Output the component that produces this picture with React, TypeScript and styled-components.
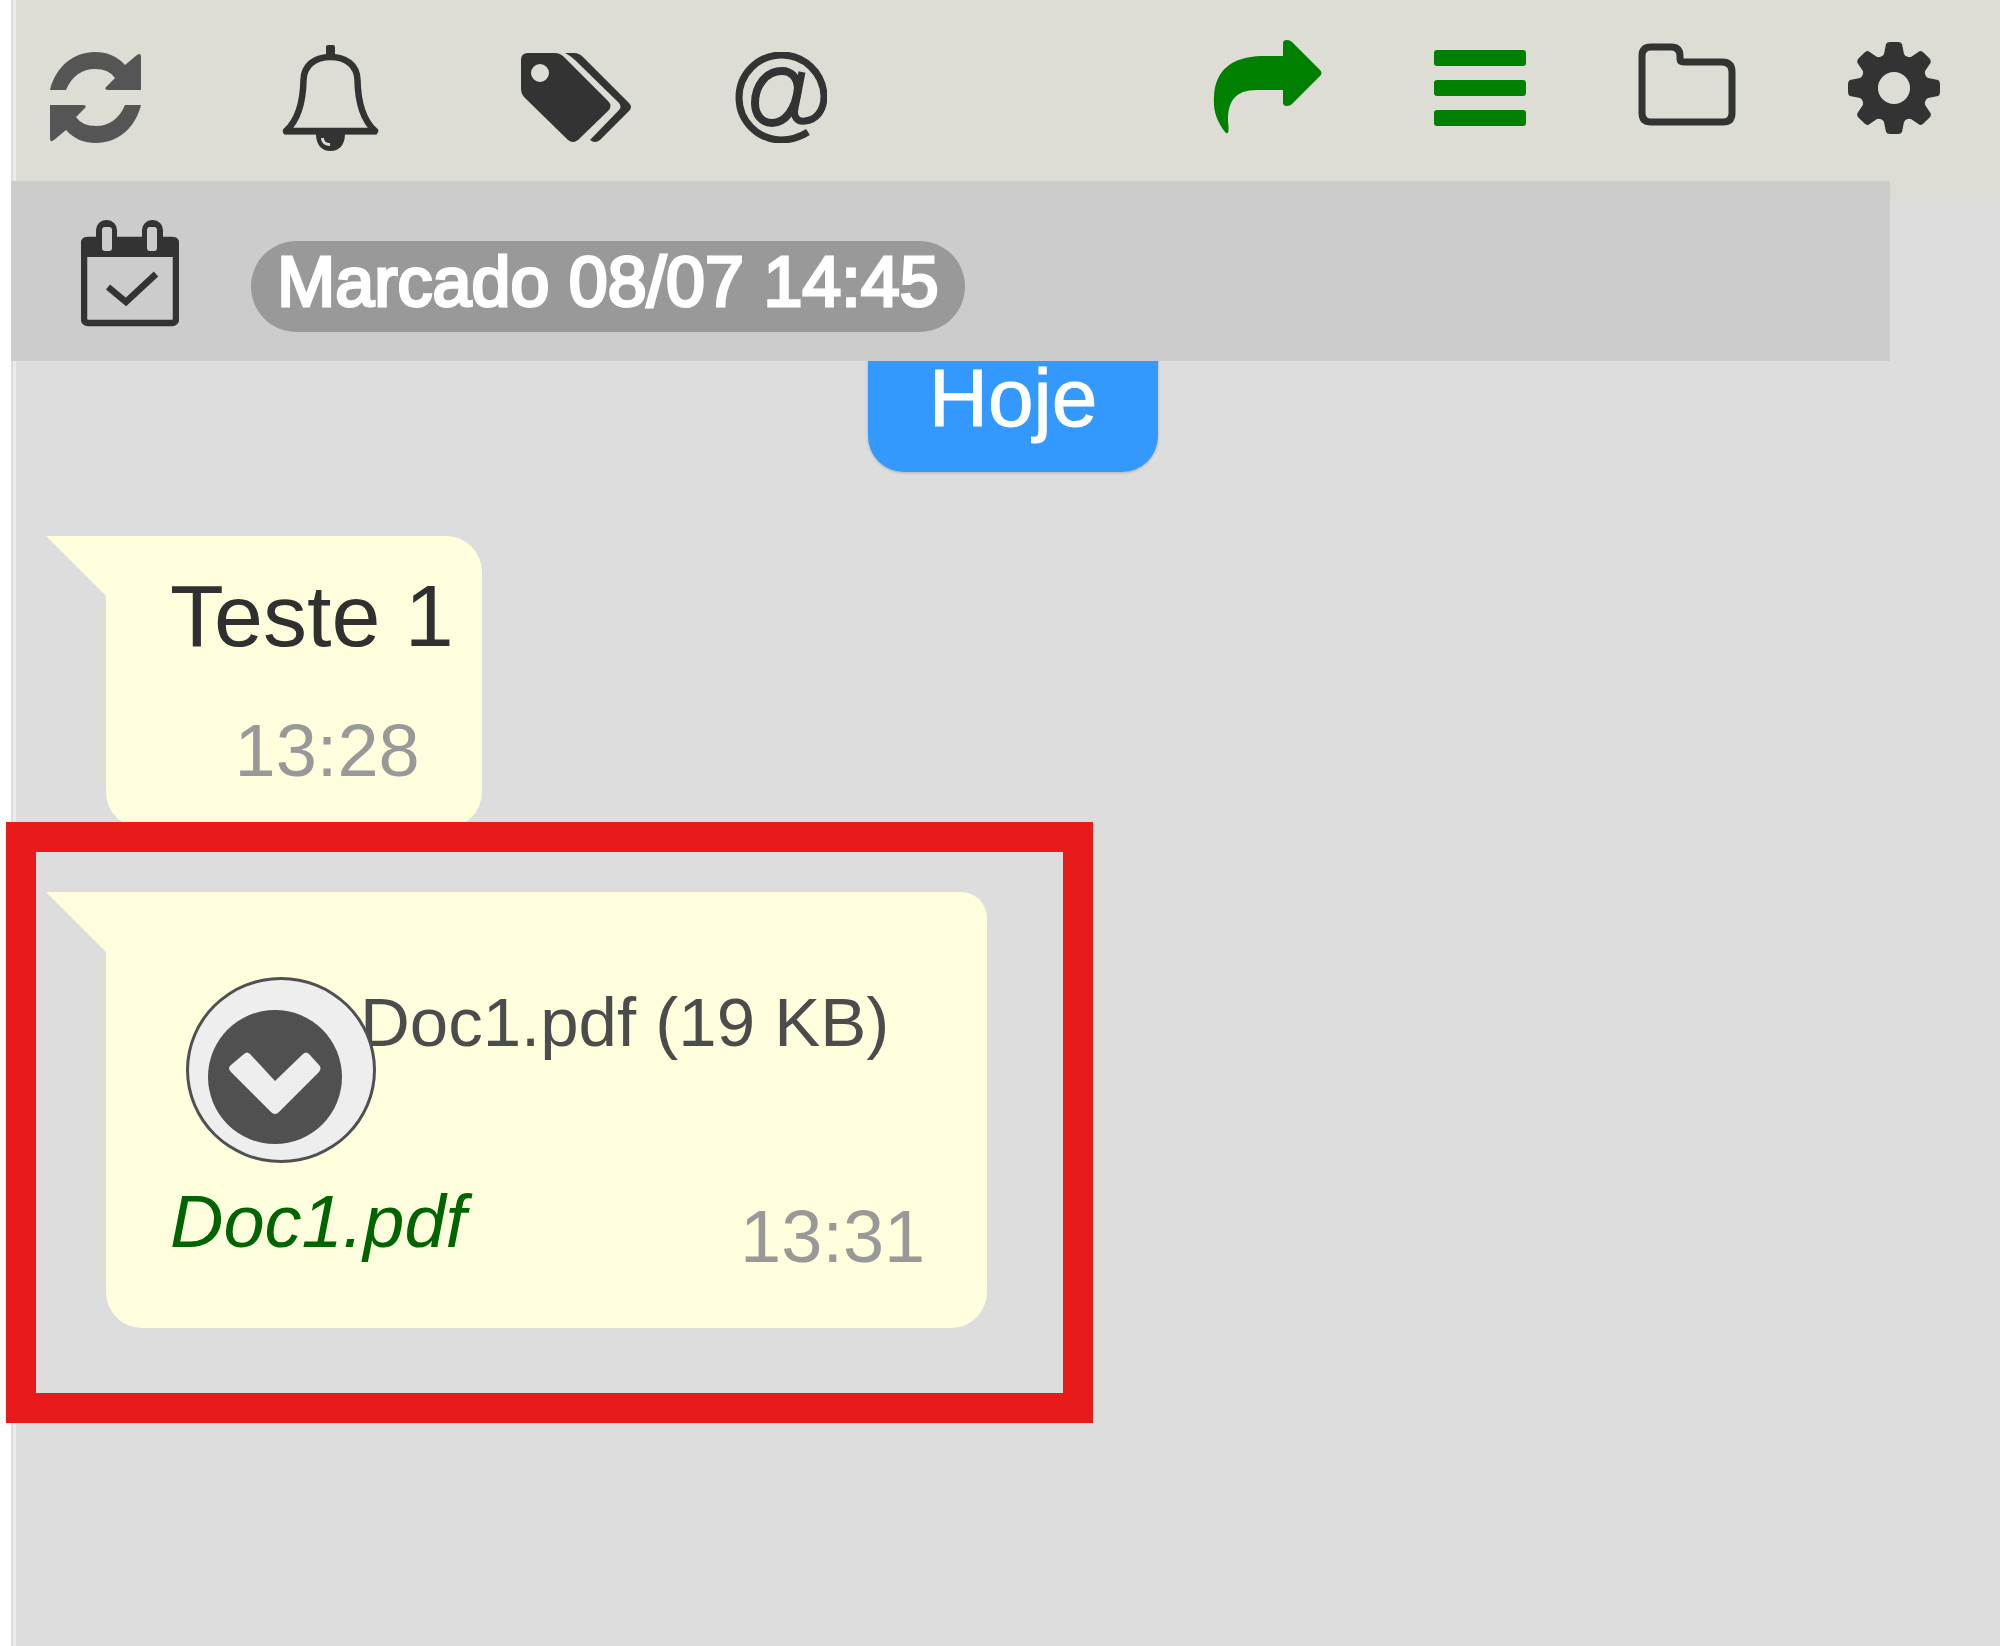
import React from 'react';
import styled, { createGlobalStyle } from 'styled-components';

const Global = createGlobalStyle`
  * { box-sizing: border-box; }
  body {
    margin: 0;
    background: #fff;
    font-family: "Liberation Sans", Arial, sans-serif;
  }
`;

const Panel = styled.main`
  display: flex;
  flex-direction: column;
  min-height: 100vh;
  margin-left: 11px;
  padding-left: 3px;
  border-left: 2px solid #dcdcdc;
  background: #ececec;
`;

const Header = styled.header`
  position: relative;
  z-index: 2;
`;

const Toolbar = styled.nav`
  display: flex;
  justify-content: space-between;
  align-items: flex-start;
  height: 200px;
  padding: 39px 60px 0 34px;
  background: #ddddd5;
`;

const ToolGroup = styled.div<{ $gap: number; $top?: number }>`
  display: flex;
  align-items: center;
  gap: ${(p) => p.$gap}px;
  padding-top: ${(p) => p.$top ?? 0}px;
`;

const IconButton = styled.button<{ $color?: string; $spaced?: boolean }>`
  display: flex;
  margin: 0 ${(p) => (p.$spaced ? 37 : 0)}px 0 0;
  padding: 0;
  border: 0;
  background: none;
  color: ${(p) => p.$color ?? '#333'};
  cursor: pointer;

  svg { display: block; }
`;

const PinnedBar = styled.div`
  position: absolute;
  top: 181px;
  left: -5px;
  right: 110px;
  display: flex;
  align-items: flex-start;
  gap: 72px;
  height: 180px;
  padding: 39px 0 0 70px;
  background: #ccc;
`;

const Badge = styled.span`
  margin-top: 21px;
  padding: 1px 26px 10px;
  border-radius: 46px;
  background: #999;
  color: #fff;
  font-size: 70px;
  line-height: 80px;
  -webkit-text-stroke: 3px #fff;
  white-space: nowrap;
`;

const Chat = styled.section`
  flex: 1;
  display: flex;
  flex-direction: column;
  align-items: flex-start;
  padding: 124px 0 64px 90px;
  background: #ddd;
`;

const DayLabel = styled.div`
  align-self: center;
  margin: 0 80px 64px 0;
  padding: 26px 61px;
  border-radius: 36px;
  background: #39f;
  box-shadow: 0 1px 3px rgba(0, 0, 0, 0.2);
  color: #fff;
  font-size: 82px;
  line-height: 96px;
  -webkit-text-stroke: 1px #fff;
`;

const Bubble = styled.article`
  position: relative;
  display: flex;
  flex-direction: column;
  padding: 28px 28px 33px 64px;
  border-radius: 0 36px 36px 36px;
  background: #ffffde;

  &::before {
    content: "";
    position: absolute;
    top: 0;
    left: -60px;
    border-top: 61px solid #ffffde;
    border-left: 61px solid transparent;
  }
`;

const FileBubble = styled(Bubble)`
  margin-top: 64px;
  padding-top: 85px;
  padding-bottom: 47px;
  border-top-right-radius: 26px;
`;

const Highlight = styled.div`
  position: absolute;
  z-index: 1;
  inset: -70px -106px -95px -100px;
  border: 30px solid #e81a1a;
  pointer-events: none;
`;

const Message = styled.p`
  margin: 0 0 39px;
  color: #303030;
  font-size: 88px;
  line-height: 104px;
  white-space: nowrap;
`;

const Time = styled.time`
  align-self: flex-end;
  margin-right: 34px;
  color: #999;
  font-size: 74px;
  line-height: 88px;
`;

const FileRow = styled.div`
  display: flex;
  align-items: flex-start;
  padding: 0 70px 15px 16px;
`;

const DownloadButton = styled.button`
  position: relative;
  flex: none;
  width: 190px;
  height: 186px;
  margin-right: -16px;
  padding: 0;
  border: 3px solid #505050;
  border-radius: 50%;
  background: #eee;
  color: #505050;
  cursor: pointer;

  svg { display: block; }
`;

const FileName = styled.span`
  padding-top: 6px;
  color: #4c4c4c;
  font-size: 69px;
  line-height: 80px;
  white-space: nowrap;
`;

const FileFooter = styled.div`
  display: flex;
  justify-content: space-between;
  height: 103px;
`;

const FileLink = styled.a`
  color: #006400;
  font-size: 74px;
  font-style: italic;
  line-height: 88px;
  text-decoration: none;
`;

const REFRESH_ARROW =
  'M0 38C6 14 24 0 45 0C57 0 67 4 75 13L87 3Q91 0 91 5V38H58Q54 38 56 35L65 26Q59 17 45 17C32 17 22 24 16 38Z';

const RefreshIcon = () => (
  <svg width="91" height="91" viewBox="0 0 91 91" fill="currentColor">
    <path d={REFRESH_ARROW} />
    <path d={REFRESH_ARROW} transform="rotate(180 45.5 45.5)" />
  </svg>
);

const BellIcon = () => (
  <svg width="99" height="107" viewBox="0 0 99 107" fill="none" stroke="currentColor" strokeLinejoin="round">
    <rect x="45" y="1" width="9" height="13" rx="2" fill="currentColor" stroke="none" />
    <path strokeWidth="6.5" d="M5 87C16 77 22 62 22.5 36C23 21 34 13 49.5 13C65 13 76 21 76.5 36C77 62 83 77 94 87Z" />
    <path strokeWidth="5" d="M3 88H96" />
    <path fill="currentColor" stroke="none" d="M35 90H64C64 101 58 107 49.5 107C41 107 35 101 35 90ZM40 94C40 98 43 102 49 102V99C45 99 43 97 43 94Z" fillRule="evenodd" />
  </svg>
);

const TagsIcon = () => (
  <svg width="112" height="91" viewBox="-1 0 112 91" fill="currentColor">
    <path fillRule="evenodd" d="M7 1H34Q39 1 43 5L87 49Q92 54 87 59L57 88Q52 92 47 88L4 46Q0 42 0 37V8Q0 1 7 1ZM19 12A9 9 0 1 0 19 30A9 9 0 1 0 19 12Z" />
    <path d="M44 1H53Q58 1 62 5L108 51Q112 55 108 59L79 88Q74 92 69 88L98 58Q101 55 98 51L54 8Q50 4 44 1Z" />
  </svg>
);

const AtIcon = () => (
  <svg width="92" height="91" viewBox="0 0 92 91" fill="none" stroke="currentColor">
    <path strokeWidth="7" d="M73 80C65 85 56 88 46 88A42.500 42.500 0 1 1 89 44C89 59 81 68 70 69C62 70 58 65 60 56L67 20" />
    <path strokeWidth="8" d="M63 36C62 25 56 19 47 19C31 19 20 34 20 51C20 63 27 71 37 71C50 71 61 57 63 36Z" />
  </svg>
);

const ForwardIcon = () => (
  <svg width="109" height="97" viewBox="0 0 109 97" fill="currentColor">
    <path d="M70 4Q70 1 74 1Q77 1 79 3L107 31Q110 34 107 37L79 65Q77 67 74 67Q70 67 70 64V51H44C22 51 15 62 15 82C16 91 16 97 12 93C4 82 0 72 1 58C2 30 20 18 48 17H70Z" />
  </svg>
);

const MenuIcon = () => (
  <svg width="92" height="76" viewBox="0 0 92 76" fill="currentColor">
    <rect width="92" height="16" rx="3" />
    <rect y="30" width="92" height="16" rx="3" />
    <rect y="60" width="92" height="16" rx="3" />
  </svg>
);

const FolderIcon = () => (
  <svg width="98" height="92" viewBox="0 0 98 92" fill="none" stroke="currentColor" strokeWidth="7">
    <path d="M4 14Q4 5 13 5H33Q42 5 42 14V17Q42 20 46 20H84Q94 20 94 30V71Q94 80 85 80H13Q4 80 4 71Z" />
  </svg>
);

const GearIcon = () => (
  <svg width="92" height="94" viewBox="-46 -47 92 94" fill="currentColor">
    <circle r="25" fill="none" stroke="currentColor" strokeWidth="18" />
    {[0, 45, 90, 135, 180, 225, 270, 315].map((angle) => (
      <path key={angle} transform={`rotate(${angle})`} d="M-13 -30L-10 -34L-8 -44Q-7 -46 -4 -46H4Q7 -46 8 -44L10 -34L13 -30Z" />
    ))}
  </svg>
);

const CalendarIcon = () => (
  <svg width="98" height="107" viewBox="0 0 98 107" fill="none" color="#333">
    <rect x="3" y="20" width="92" height="83" rx="4" stroke="currentColor" strokeWidth="6.500" />
    <path fill="currentColor" d="M0 23Q0 17 6 17H92Q98 17 98 23V37H0Z" />
    <rect x="15" width="21" height="34" rx="10" fill="currentColor" />
    <rect x="61" width="21" height="34" rx="10" fill="currentColor" />
    <rect x="21" y="7" width="10" height="24" rx="3" fill="#ccc" />
    <rect x="66" y="7" width="10" height="24" rx="3" fill="#ccc" />
    <path d="M27 67L45 82L75 54" stroke="currentColor" strokeWidth="6.500" />
  </svg>
);

const DownloadIcon = () => (
  <svg width="184" height="180" viewBox="3 3 184 180">
    <circle cx="89" cy="100" r="67" fill="currentColor" />
    <path fill="#eee" d="M45 95Q41 91 45 88L58 77Q61 74 64 77L89 104L117 77Q120 74 123 77L133 88Q136 91 133 95L93 135Q89 139 85 135Z" />
  </svg>
);

export default function App() {
  return (
    <>
      <Global />
      <Panel>
        <Header>
          <Toolbar>
            <ToolGroup $gap={103} $top={5}>
              <IconButton type="button" aria-label="Atualizar" $color="#555" $spaced><RefreshIcon /></IconButton>
              <IconButton type="button" aria-label="Notificações" $spaced><BellIcon /></IconButton>
              <IconButton type="button" aria-label="Etiquetas"><TagsIcon /></IconButton>
              <IconButton type="button" aria-label="Menções"><AtIcon /></IconButton>
            </ToolGroup>
            <ToolGroup $gap={112}>
              <IconButton type="button" aria-label="Encaminhar" $color="#008000"><ForwardIcon /></IconButton>
              <IconButton type="button" aria-label="Menu" $color="#008000"><MenuIcon /></IconButton>
              <IconButton type="button" aria-label="Arquivos"><FolderIcon /></IconButton>
              <IconButton type="button" aria-label="Configurações"><GearIcon /></IconButton>
            </ToolGroup>
          </Toolbar>
          <PinnedBar>
            <CalendarIcon />
            <Badge>Marcado 08/07 14:45</Badge>
          </PinnedBar>
        </Header>
        <Chat>
          <DayLabel>Hoje</DayLabel>
          <Bubble>
            <Message>Teste 1</Message>
            <Time>13:28</Time>
          </Bubble>
          <FileBubble>
            <Highlight />
            <FileRow>
              <DownloadButton type="button" aria-label="Baixar Doc1.pdf"><DownloadIcon /></DownloadButton>
              <FileName>Doc1.pdf (19 KB)</FileName>
            </FileRow>
            <FileFooter>
              <FileLink href="#doc1">Doc1.pdf</FileLink>
              <Time>13:31</Time>
            </FileFooter>
          </FileBubble>
        </Chat>
      </Panel>
    </>
  );
}
